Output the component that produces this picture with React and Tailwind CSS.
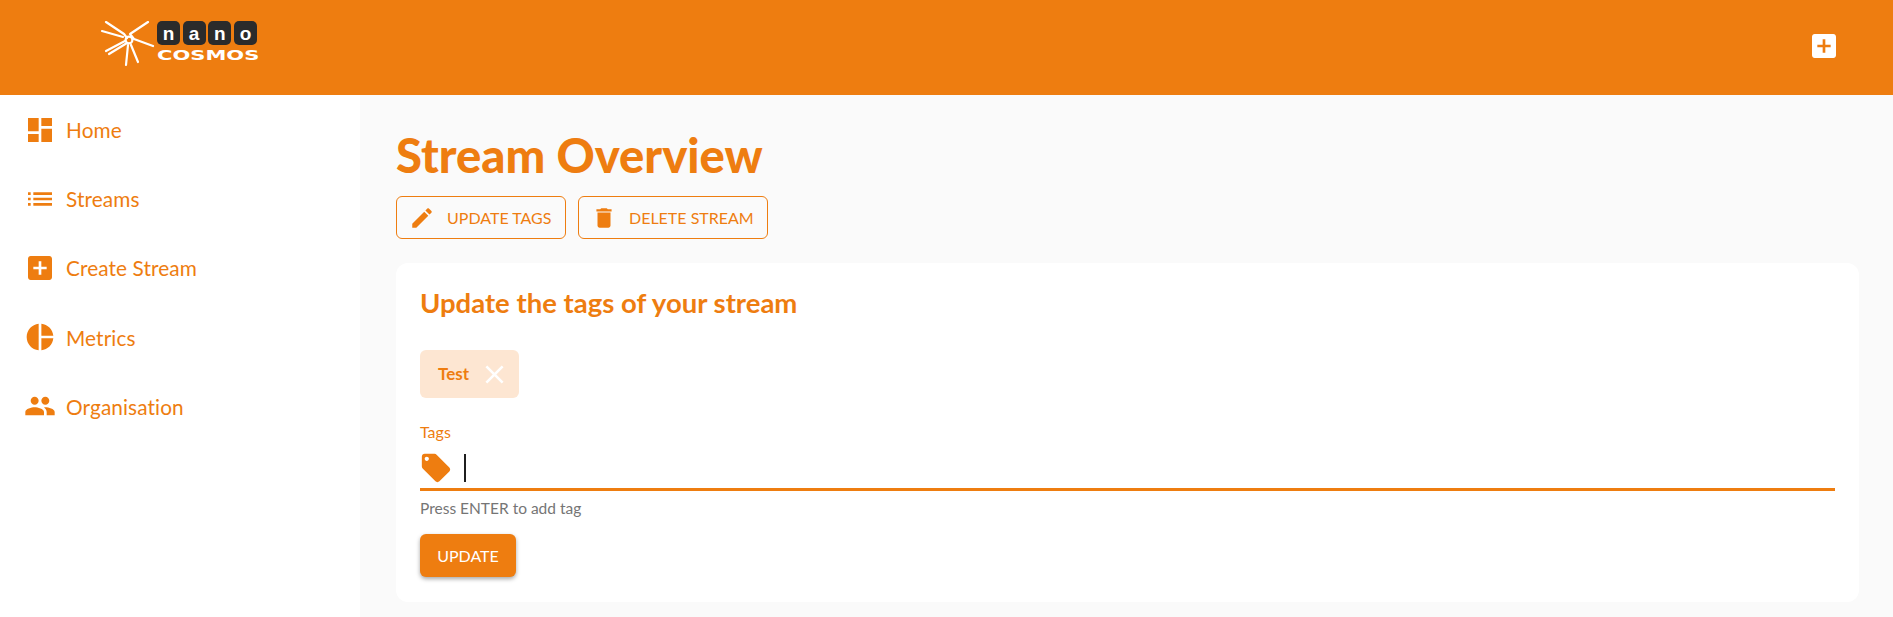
const ORANGE = 'text-[#ee7d10]'

function Icon({ d, className }) {
  return (
    <svg viewBox="0 0 24 24" fill="currentColor" className={className}>
      <path d={d} />
    </svg>
  )
}

const paths = {
  dashboard: 'M3 13h8V3H3v10zm0 8h8v-6H3v6zm10 0h8V11h-8v10zm0-18v6h8V3h-8z',
  list: 'M3 13h2v-2H3v2zm0 4h2v-2H3v2zm0-8h2V7H3v2zm4 4h14v-2H7v2zm0 4h14v-2H7v2zM7 7v2h14V7H7z',
  addBox: 'M19 3H5c-1.11 0-2 .9-2 2v14c0 1.1.89 2 2 2h14c1.1 0 2-.9 2-2V5c0-1.1-.9-2-2-2zm-2 10h-4v4h-2v-4H7v-2h4V7h2v4h4v2z',
  pie: 'M11 2v20c-5.07-.5-9-4.79-9-10s3.93-9.5 9-10zm2.03 0v8.99H22c-.47-4.74-4.24-8.52-8.97-8.99zm0 11.01V22c4.74-.47 8.5-4.25 8.97-8.99h-8.97z',
  people: 'M16 11c1.66 0 2.99-1.34 2.99-3S17.66 5 16 5c-1.66 0-3 1.34-3 3s1.34 3 3 3zm-8 0c1.66 0 2.99-1.34 2.99-3S9.66 5 8 5C6.34 5 5 6.34 5 8s1.34 3 3 3zm0 2c-2.33 0-7 1.17-7 3.5V19h14v-2.5c0-2.33-4.67-3.5-7-3.5zm8 0c-.29 0-.62.02-.97.05 1.16.84 1.97 1.97 1.97 3.45V19h6v-2.5c0-2.33-4.67-3.5-7-3.5z',
  edit: 'M3 17.25V21h3.75L17.81 9.94l-3.75-3.75L3 17.25zM20.71 7.04c.39-.39.39-1.02 0-1.41l-2.34-2.34c-.39-.39-1.02-.39-1.41 0l-1.83 1.83 3.75 3.75 1.83-1.83z',
  trash: 'M6 19c0 1.1.9 2 2 2h8c1.1 0 2-.9 2-2V7H6v12zM19 4h-3.5l-1-1h-5l-1 1H5v2h14V4z',
  tag: 'M21.41 11.58l-9-9C12.05 2.22 11.55 2 11 2H4c-1.1 0-2 .9-2 2v7c0 .55.22 1.05.59 1.42l9 9c.36.36.86.58 1.41.58.55 0 1.05-.22 1.41-.59l7-7c.37-.36.59-.86.59-1.41 0-.55-.23-1.06-.59-1.42zM5.5 7C4.67 7 4 6.33 4 5.5S4.67 4 5.5 4 7 4.67 7 5.5 6.33 7 5.5 7z',
  close: 'M19 6.41L17.59 5 12 10.59 6.41 5 5 6.41 10.59 12 5 17.59 6.41 19 12 13.41 17.59 19 19 17.59 13.41 12z',
}

const navItems = [
  { label: 'Home', icon: paths.dashboard },
  { label: 'Streams', icon: paths.list },
  { label: 'Create Stream', icon: paths.addBox },
  { label: 'Metrics', icon: paths.pie },
  { label: 'Organisation', icon: paths.people },
]

function Logo() {
  return (
    <div className="flex items-start text-white mt-[21px] ml-[101px]">
      {/* burst of rays */}
      <svg viewBox="0 0 56 46" className="w-[56px] h-[46px] shrink-0" fill="none" stroke="white" strokeWidth="2.2" strokeLinecap="round" strokeLinejoin="round">
        <path d="M5 1 L23 13 L26 17" />
        <path d="M1 10 L22 16" />
        <path d="M5 30 L24 20" />
        <path d="M8 33 L26 22" />
        <path d="M25 44 L27 24" />
        <path d="M37 41 L30 24" />
        <path d="M52 25 L33 18 L29 13 L47 1" />
        <circle cx="28" cy="19" r="3.4" />
      </svg>
      <div className="flex flex-col w-[100px]">
        <div className="flex justify-between">
          {['n', 'a', 'n', 'o'].map((c, i) => (
            <span key={i} className="w-[23px] h-[24px] rounded-[5px] bg-[#2b2b2b] flex items-center justify-center text-[19px] font-bold leading-none font-['Liberation_Sans']">
              {c}
            </span>
          ))}
        </div>
        <span className="mt-[3px] text-[14px] leading-[14px] font-bold font-['DejaVu_Sans'] whitespace-nowrap origin-left scale-x-[1.5]">COSMOS</span>
      </div>
    </div>
  )
}

export default function App() {
  return (
    <div className={`h-[617px] flex flex-col bg-[#fafafa] overflow-hidden font-['Lato',sans-serif] ${ORANGE}`}>
      {/* Header */}
      <header className="h-[95px] shrink-0 bg-[#ee7d10] flex items-start justify-between pr-[53px]">
        <Logo />
        <button className="text-white mt-[30px]">
          <Icon d={paths.addBox} className="w-[32px] h-[32px]" />
        </button>
      </header>

      <div className="flex flex-1 min-h-0">
        {/* Sidebar */}
        <nav className="w-[360px] shrink-0 bg-white">
          {navItems.map((item) => (
            <a key={item.label} className="h-[69.2px] flex items-center pl-[24px] gap-[10px] text-[20.8px] tracking-[0.1px]">
              <Icon d={item.icon} className="w-[32px] h-[32px] shrink-0" />
              <span>{item.label}</span>
            </a>
          ))}
        </nav>

        {/* Main */}
        <main className="flex-1 pl-[36px] pr-[34px] pt-[34px]">
          <h1 className="text-[47.2px] leading-[52px] font-black">Stream Overview</h1>

          <div className="flex gap-[12px] mt-[15px]">
            <button className="w-[170px] h-[43px] flex items-center pl-[12px] gap-[12px] border border-[#ee7d10] rounded-[6px] text-[16px]">
              <Icon d={paths.edit} className="w-[26px] h-[26px] shrink-0" />
              UPDATE TAGS
            </button>
            <button className="w-[190px] h-[43px] flex items-center pl-[12px] gap-[12px] border border-[#ee7d10] rounded-[6px] text-[16px]">
              <Icon d={paths.trash} className="w-[26px] h-[26px] shrink-0" />
              DELETE STREAM
            </button>
          </div>

          {/* Card */}
          <section className="mt-[24px] h-[339px] bg-white rounded-[12px] px-[24px] pt-[23px]">
            <h2 className="text-[27.5px] leading-[34px] font-bold">Update the tags of your stream</h2>

            <div className="mt-[30px] w-[99px] h-[48px] rounded-[6px] bg-[#fde6d2] flex items-center pl-[18px] gap-[10px]">
              <span className="text-[17px] font-bold">Test</span>
              <Icon d={paths.close} className="w-[31px] h-[31px] text-white shrink-0" />
            </div>

            <label className="block mt-[24px] text-[16px] leading-[20px]">Tags</label>
            <div className="h-[41px] mt-[5px] flex items-center gap-[11px]">
              <Icon d={paths.tag} className="w-[34px] h-[34px] -ml-[1px]" />
              <span className="w-[2px] h-[28px] bg-[#1f1f1f]" />
            </div>
            <div className="h-[3px] bg-[#ee7d10]" />
            <p className="mt-[7px] text-[15.5px] leading-[20px] text-[#757575]">Press ENTER to add tag</p>

            <button className="mt-[16px] w-[96px] h-[43px] rounded-[6px] bg-[#ee7d10] text-white text-[16px] shadow-[0_2px_4px_rgba(0,0,0,0.35)]">
              UPDATE
            </button>
          </section>
        </main>
      </div>
    </div>
  )
}
